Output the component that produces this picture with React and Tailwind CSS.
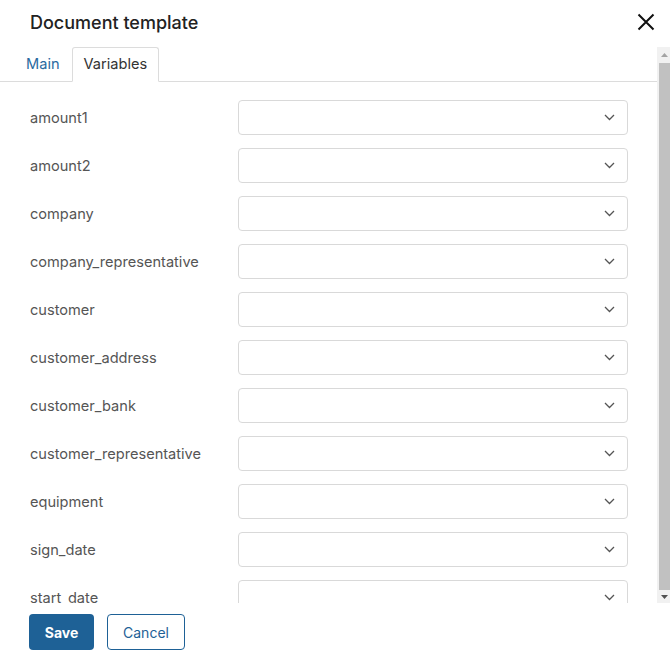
import React from "react";

const rows = [
  "amount1",
  "amount2",
  "company",
  "company_representative",
  "customer",
  "customer_address",
  "customer_bank",
  "customer_representative",
  "equipment",
  "sign_date",
  "start_date",
];

function Chevron() {
  return (
    <svg width="11" height="7" viewBox="0 0 11 7" fill="none" className="shrink-0">
      <path d="M1 1l4.5 4.5L10 1" stroke="#555" strokeWidth="1.3" />
    </svg>
  );
}

export default function App() {
  return (
    <div
      className="w-[670px] h-[651px] bg-white flex flex-col overflow-hidden"
      style={{ fontFamily: "Inter, 'Noto Sans', sans-serif" }}
    >
      <div className="h-[47px] shrink-0 flex items-center justify-between pl-[30px] pr-[15px] pb-[3px]">
        <div className="text-[18px] font-medium text-[#222]">Document template</div>
        <svg width="18" height="18" viewBox="0 0 18 18" fill="none">
          <path d="M1.5 1.5l15 15M16.5 1.5l-15 15" stroke="#111" strokeWidth="2" />
        </svg>
      </div>
      <div className="h-[556px] shrink-0 flex">
        <div className="flex-1 overflow-hidden">
          <div className="flex h-[35px] border-b border-[#dcdcdc] pl-[14px]">
            <div className="px-[12px] pt-[1px] flex items-center text-[14.6px] text-[#2a6aa0] mb-[-1px]">Main</div>
            <div className="px-[11px] pt-[1px] flex items-center text-[14.6px] text-[#333] border border-[#dcdcdc] border-b-white rounded-t-[3px] bg-white mb-[-1px]">
              Variables
            </div>
          </div>
          <div className="pt-[18px] pl-[30px] pr-[29px] flex flex-col gap-[13px] pb-[14px]">
            {rows.map((r) => (
              <div key={r} className="flex items-center">
                <div className="w-[208px] shrink-0 text-[14.6px] text-[#555] pt-[3px]">{r}</div>
                <div className="flex-1 h-[35px] border border-[#d9d9d9] rounded-[4px] flex items-center justify-end pr-[12px]">
                  <Chevron />
                </div>
              </div>
            ))}
          </div>
        </div>
        <div className="w-[13px] shrink-0 bg-[#f1f1f1] flex flex-col items-end">
          <div className="h-[16px] w-[11px] flex items-center justify-center">
            <svg width="7" height="4" viewBox="0 0 7 4">
              <path d="M0 4L3.5 0L7 4Z" fill="#a3a3a3" />
            </svg>
          </div>
          <div className="flex-1 w-[11px] bg-[#c1c1c1]" />
          <div className="h-[13px] w-[11px] flex items-center justify-center">
            <svg width="7" height="4" viewBox="0 0 7 4">
              <path d="M0 0L3.5 4L7 0Z" fill="#505050" />
            </svg>
          </div>
        </div>
      </div>
      <div className="flex gap-[13px] pl-[29px] pt-[11px]">
        <button className="h-[36px] w-[65px] rounded-[4px] bg-[#1e6196] text-white text-[14px] font-bold">
          Save
        </button>
        <button className="h-[36px] w-[78px] rounded-[4px] border border-[#1e6196] text-[#1e6196] text-[14px] bg-white">
          Cancel
        </button>
      </div>
    </div>
  );
}
